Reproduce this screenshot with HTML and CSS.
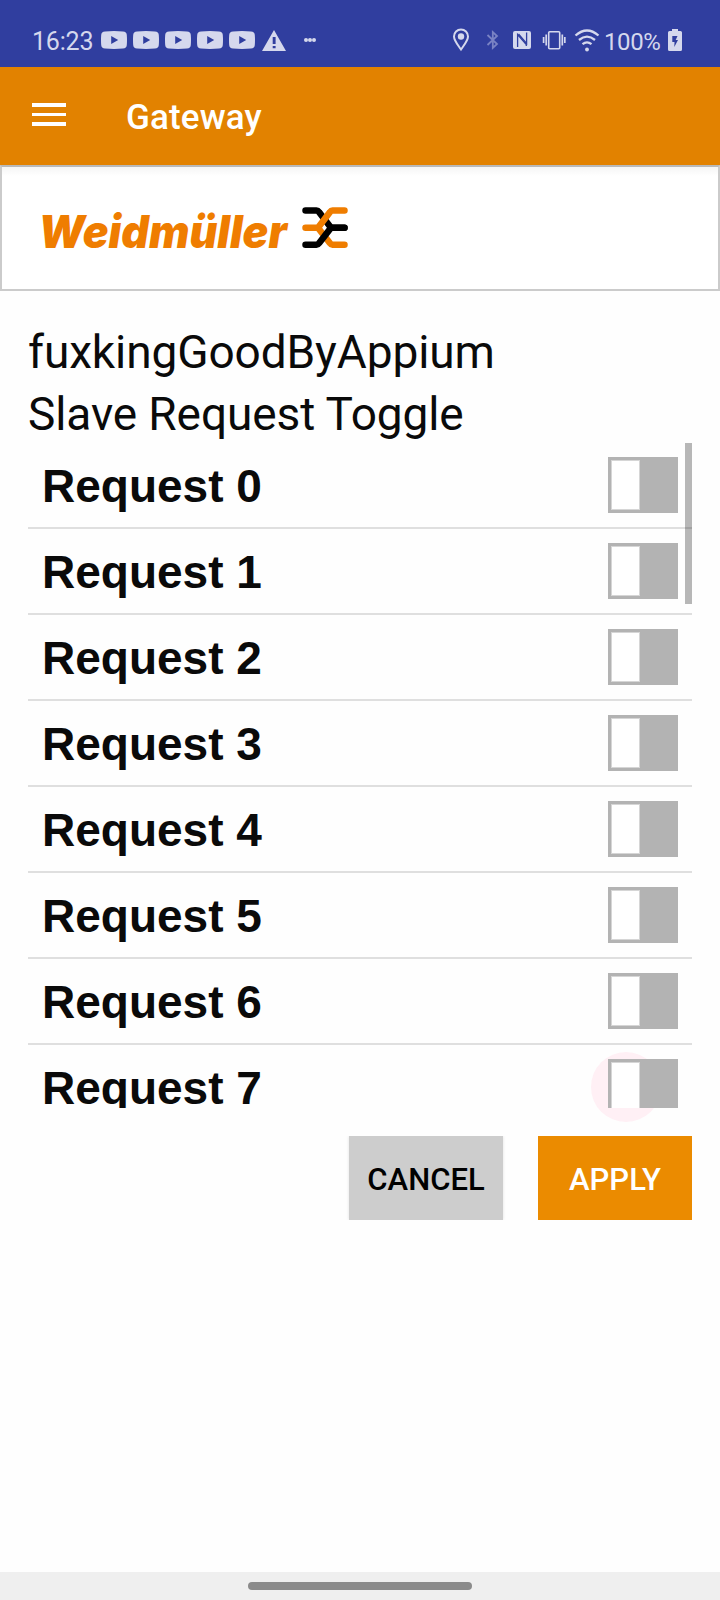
FILE: index.html
```html
<!DOCTYPE html>
<html lang="en">
<head>
<meta charset="utf-8">
<title>Gateway</title>
<link rel="stylesheet" href="styles.css">
</head>
<body>
<svg width="0" height="0" class="defs">
  <symbol id="video" viewBox="0 0 26 18"><path fill-rule="evenodd" d="M4 .4Q13-.4 22 .4Q25.6.6 25.8 4Q26.2 9 25.8 14Q25.6 17.4 22 17.6Q13 18.4 4 17.6Q.4 17.4.2 14Q-.2 9 .2 4Q.4.6 4 .4ZM10.2 5V13L17.2 9Z"/></symbol>
</svg>
<div class="screen">
  <header class="status">
    <span class="clock">16:23</span>
    <div class="notifications">
      <svg class="video"><use href="#video"/></svg>
      <svg class="video"><use href="#video"/></svg>
      <svg class="video"><use href="#video"/></svg>
      <svg class="video"><use href="#video"/></svg>
      <svg class="video"><use href="#video"/></svg>
    </div>
    <svg class="warning" viewBox="0 0 24 21"><path fill-rule="evenodd" d="M12 0L24 21H0ZM10.7 7V14H13.6V7ZM10.7 16V18.3H13.6V16Z"/></svg>
    <svg class="more" viewBox="0 0 12 4"><circle cx="2" cy="2" r="2"/><circle cx="6" cy="2" r="2"/><circle cx="10" cy="2" r="2"/></svg>
    <svg class="system" width="150" height="24" viewBox="452 28 150 24">
      <path d="M461 49.500C457.500 44.500 454 40.500 454 36.500A7 7 0 0 1 468 36.500C468 40.500 464.500 44.500 461 49.500Z" fill="none" stroke="#d5d8ed" stroke-width="2"/>
      <circle cx="461" cy="36.500" r="3.200"/>
      <path d="M487.500 35L497 44L492.800 48V32L497 36L487.500 45" fill="none" stroke="#7a83c4" stroke-width="1.800"/>
      <rect x="513" y="31" width="18" height="18" rx="2"/>
      <path d="M517.600 47V34.500L526.300 44.500V46" fill="none" stroke="#303e9f" stroke-width="1.300"/>
      <path d="M526.600 32.500V43.500L518.500 34" fill="none" stroke="#303e9f" stroke-width="1.300"/>
      <rect x="548.700" y="31.700" width="11" height="17" rx="1" fill="none" stroke="#d5d8ed" stroke-width="1.600"/>
      <path d="M546.200 34.500V45.500M562.300 34.500V45.500M543.600 37V43M564.800 37V43" stroke="#d5d8ed" stroke-width="1.700"/>
      <g fill="none" stroke="#d5d8ed" stroke-width="2.300"><path d="M575.500 35.500Q587 25.500 598.500 35.500M579 40Q587 33.200 595 40M582.500 44.200Q587 40.500 591.500 44.200"/></g>
      <circle cx="587" cy="49.500" r="1.900"/>
    </svg>
    <span class="percent">100%</span>
    <svg class="battery" viewBox="0 0 14 22"><path fill-rule="evenodd" d="M4 0H10V2H12.500Q14 2 14 3.500V20.500Q14 22 12.500 22H1.500Q0 22 0 20.500V3.500Q0 2 1.500 2H4ZM4.300 7V13H6.500L6.300 18L10 11H7.700L9.500 7Z"/></svg>
  </header>
  <nav class="appbar">
    <div class="menu"><i></i><i></i><i></i></div>
    <h1 class="title">Gateway</h1>
  </nav>
  <div class="brand">
    <svg width="320" height="60" viewBox="36 200 320 60">
      <text class="wordmark" x="38.500" y="248" textLength="248.500" lengthAdjust="spacingAndGlyphs">Weidmüller</text>
      <g fill="none" stroke-width="6.500" stroke-linecap="round" stroke-linejoin="round">
        <path stroke="#000" d="M305.500 210.500H316.500Q318 210.500 319 212L331 227.700H344.500"/>
        <path stroke="#ef7d00" d="M305.500 227.700H318L330 212Q331 210.500 332.500 210.500H344.500M318 227.700L330 243.300Q331 244.800 332.500 244.800H344.500"/>
        <path stroke="#000" d="M305.500 244.800H316.500Q318 244.800 319 243.300L331 227.700H344.500"/>
      </g>
    </svg>
  </div>
  <main class="content">
    <h2 class="heading"><span class="name">fuxkingGoodByAppium</span><br><span class="subtitle">Slave Request Toggle</span></h2>
    <div class="list-area">
      <div class="touch"></div>
      <div class="list">
        <div class="row"><span>Request 0</span><div class="toggle"><i></i></div></div>
        <div class="row"><span>Request 1</span><div class="toggle"><i></i></div></div>
        <div class="row"><span>Request 2</span><div class="toggle"><i></i></div></div>
        <div class="row"><span>Request 3</span><div class="toggle"><i></i></div></div>
        <div class="row"><span>Request 4</span><div class="toggle"><i></i></div></div>
        <div class="row"><span>Request 5</span><div class="toggle"><i></i></div></div>
        <div class="row"><span>Request 6</span><div class="toggle"><i></i></div></div>
        <div class="row"><span>Request 7</span><div class="toggle"><i></i></div></div>
      </div>
      <div class="scrollbar"></div>
    </div>
    <div class="actions">
      <button class="button cancel">CANCEL</button>
      <button class="button apply">APPLY</button>
    </div>
  </main>
  <footer class="navbar"><div class="pill"></div></footer>
</div>
</body>
</html>
```
FILE: styles.css
```css
* { box-sizing: border-box; }
body { margin: 0; font-family: Roboto, sans-serif; color: #0a0a0a; }
.defs { position: absolute; }
svg { display: block; flex: none; }
.screen { width: 720px; height: 1600px; display: flex; flex-direction: column; background: #fefefe; overflow: hidden; }
.status { height: 67px; flex: none; background: #303e9f; color: #d5d8ed; fill: #d5d8ed; display: flex; align-items: center; padding: 13px 0 0 32px; font-size: 25px; line-height: 30px; white-space: nowrap; }
.clock { width: 69px; padding-top: 4px; letter-spacing: -0.2px; }
.notifications { display: flex; gap: 6px; }
.video { width: 26px; height: 18px; }
.warning { width: 24px; height: 21px; margin-left: 7px; }
.more { width: 12px; height: 4px; margin-left: 18px; }
.system { margin-left: 136px; }
.percent { width: 64px; margin-left: 2px; padding-top: 3px; font-size: 24px; letter-spacing: -0.4px; }
.battery { width: 14px; height: 22px; }
.appbar { height: 98px; flex: none; background: #e28200; display: flex; align-items: center; padding-left: 32px; color: #fff; }
.menu { width: 34px; display: flex; flex-direction: column; gap: 6px; margin-bottom: 3px; }
.menu i { height: 3.500px; background: #fff; }
.title { margin: 4px 0 0 60px; font-size: 35px; font-weight: 500; line-height: 44px; letter-spacing: 0.15px; }
.brand { height: 126px; flex: none; border: 2px solid #cbcbcb; border-top-color: #b9b9b9; padding: 33px 0 0 34px; background: linear-gradient(#f5f5f5, #fff 9px); }
.wordmark { font: italic 900 45px Inter, sans-serif; fill: #ef7d00; }
.content { flex: 1; padding: 30px 28px 0; }
.heading { margin: 0; height: 122px; font-size: 46px; font-weight: 400; line-height: 62px; letter-spacing: -0.1px; white-space: nowrap; }
.list-area { position: relative; height: 665px; }
.touch { position: absolute; left: 563px; top: 609px; width: 70px; height: 70px; border-radius: 50%; background: #fff0f5; }
.list { position: relative; height: 665px; overflow: hidden; }
.row { height: 86px; border-bottom: 2px solid #dfdfdf; padding: 0 14px; display: flex; align-items: center; justify-content: space-between; font: bold 46px/54px "Liberation Sans", sans-serif; }
.row span { padding-top: 2px; }
.toggle { width: 70px; height: 56px; padding: 3px; background: #b3b3b3; }
.toggle i { display: block; width: 29px; height: 50px; background: #fff; border: 1px solid #d6d6d6; }
.scrollbar { position: absolute; right: 0; top: 0; width: 7px; height: 161px; background: rgba(0, 0, 0, .28); }
.actions { display: flex; justify-content: flex-end; gap: 35px; padding-top: 28px; }
.button { width: 154px; height: 84px; border: 0; padding: 3px 0 0; font: 500 31px/40px Roboto, sans-serif; }
.cancel { background: #cdcdcd; color: #000; box-shadow: 0 0 3px rgba(0, 0, 0, .12); clip-path: inset(0 -4px 0 -4px); }
.apply { background: #eb8b00; color: #fff; }
.navbar { height: 28px; flex: none; background: #efefef; padding-top: 10px; }
.pill { width: 224px; height: 8px; border-radius: 4px; background: #8b8b8b; margin: 0 auto; }
```
